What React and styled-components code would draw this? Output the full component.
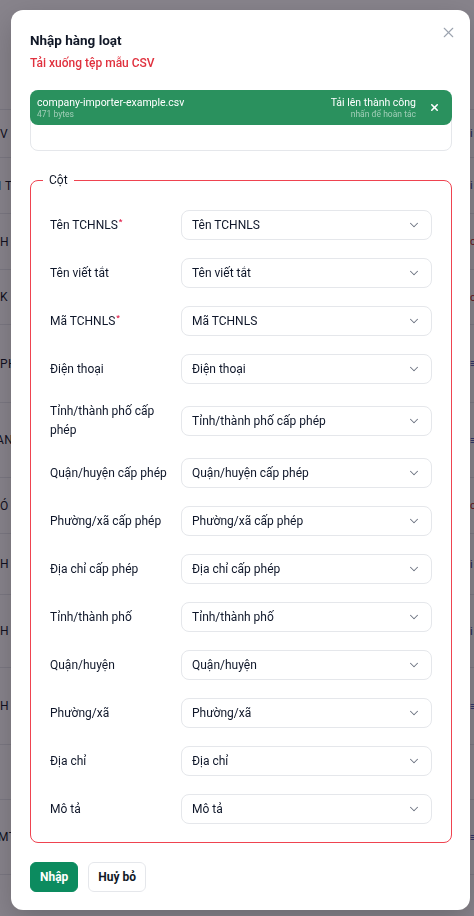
import React from "react";
import styled, { createGlobalStyle } from "styled-components";
import { ChevronDown, X } from "lucide-react";

const GlobalStyle = createGlobalStyle`
  * { box-sizing: border-box; }
  html, body { margin: 0; padding: 0; }
  body {
    font-family: Roboto, Inter, "Liberation Sans", sans-serif;
    color: #111827;
    background: #ffffff;
    overflow: hidden;
  }
`;

const Page = styled.div`
  width: 474px;
  height: 916px;
  background: #ffffff;
  overflow: hidden;
`;

const PageHeader = styled.div`
  height: 110px;
  border-bottom: 1px solid #e5e7eb;
`;

const TableRow = styled.div`
  height: ${(p) => p.$h}px;
  border-bottom: 1px solid #e5e7eb;
  display: flex;
  align-items: center;
  justify-content: space-between;
  font-size: 12px;
  color: #111827;
  white-space: nowrap;
`;

const CutCell = styled.span`
  margin-left: ${(p) => p.$offset}px;
  letter-spacing: 0.5px;
`;

const SideCell = styled.span`
  margin-right: -30px;
  width: 34px;
  font-size: 11px;
  color: ${(p) => p.$color};
`;

const Overlay = styled.div`
  position: fixed;
  inset: 0;
  background: rgba(18, 10, 26, 0.5);
`;

const Modal = styled.div`
  position: fixed;
  top: 10px;
  left: 11px;
  width: 459px;
  background: #ffffff;
  border-radius: 12px;
  padding: 20px 18px 18px 19px;
  box-shadow: 0 10px 30px rgba(0, 0, 0, 0.2);
`;

const CloseButton = styled.button`
  position: absolute;
  top: 11px;
  right: 11px;
  width: 22px;
  height: 22px;
  border: 0;
  background: none;
  padding: 0;
  color: #9ca3af;
  display: flex;
  align-items: center;
  justify-content: center;
`;

const Title = styled.h2`
  margin: 0;
  font-size: 13.5px;
  line-height: 20px;
  font-weight: 700;
  color: #111827;
`;

const TemplateLink = styled.a`
  display: block;
  margin-top: 4px;
  font-size: 12px;
  line-height: 18px;
  font-weight: 500;
  color: #e0313e;
  text-decoration: none;
`;

const UploadBox = styled.div`
  margin-top: 18px;
  height: 61px;
  border: 1px solid #e5e7eb;
  border-radius: 8px;
`;

const FileBar = styled.div`
  margin: -1px -1px 0;
  height: 35px;
  background: #2a915e;
  border-radius: 8px;
  display: flex;
  align-items: center;
  padding: 0 12px 0 7px;
  color: #ffffff;
`;

const FileInfo = styled.div`
  flex: 1;
  display: flex;
  flex-direction: column;
  align-items: ${(p) => (p.$right ? "flex-end" : "flex-start")};
`;

const FileMain = styled.span`
  font-size: 10.5px;
  line-height: 13px;
`;

const FileSub = styled.span`
  font-size: 8.5px;
  line-height: 11px;
  color: rgba(255, 255, 255, 0.55);
`;

const UndoButton = styled.button`
  border: 0;
  background: none;
  color: #ffffff;
  padding: 0;
  margin-left: 13px;
  display: flex;
  align-items: center;
`;

const Fieldset = styled.fieldset`
  margin: 20px 0 0;
  border: 1px solid #ef4350;
  border-radius: 8px;
  padding: 21px 19px 18px 19px;
  min-width: 0;
`;

const Legend = styled.legend`
  margin-left: -7px;
  padding: 0 6px;
  font-size: 12px;
  line-height: 18px;
  color: #111827;
`;

const Grid = styled.div`
  display: grid;
  grid-template-columns: 123px 1fr;
  column-gap: 8px;
  row-gap: 18px;
  align-items: center;
`;

const Label = styled.label`
  font-size: 12px;
  line-height: 19px;
  color: #0f172a;
`;

const Required = styled.sup`
  color: #e11d48;
  font-size: 8px;
  font-weight: 700;
  line-height: 0;
  margin-left: 1px;
`;

const Select = styled.div`
  height: 30px;
  border: 1px solid #e5e7eb;
  border-radius: 8px;
  padding: 0 10px;
  display: flex;
  align-items: center;
  justify-content: space-between;
  font-size: 12px;
  color: #0f172a;
  background: #ffffff;
`;

const Footer = styled.div`
  margin-top: 19px;
  display: flex;
  gap: 10px;
`;

const Button = styled.button`
  height: 30px;
  padding: 0 9px;
  border-radius: 6px;
  border: 1px solid ${(p) => (p.$primary ? "#0c8b5f" : "#e5e7eb")};
  background: ${(p) => (p.$primary ? "#0c8b5f" : "#ffffff")};
  color: ${(p) => (p.$primary ? "#ffffff" : "#111827")};
  font-family: inherit;
  font-size: 12px;
  font-weight: 700;
`;

const bgRows = [
  { h: 48, left: "V", offset: 0, side: "i", color: "#1e3a8a" },
  { h: 56, left: "I T", offset: -2, side: "i", color: "#1e3a8a" },
  { h: 56, left: "H", offset: 0, side: "c", color: "#b91c1c" },
  { h: 55, left: "K", offset: 0, side: "c", color: "#b91c1c" },
  { h: 78, left: "PHA", offset: 0, side: "≡", color: "#1e40af" },
  { h: 75, left: "ANG", offset: -4, side: "≡", color: "#1e40af" },
  { h: 56, left: "Ó", offset: 0, side: "c", color: "#b91c1c" },
  { h: 61, left: "H", offset: 0, side: "i", color: "#1e3a8a" },
  { h: 73, left: "H", offset: 0, side: "i", color: "#1e3a8a" },
  { h: 77, left: "H", offset: 0, side: "≡", color: "#1e40af" },
  { h: 55, left: "", offset: 0, side: "", color: "#1e3a8a" },
  { h: 75, left: "MT", offset: -2, side: "≡", color: "#1e40af" },
];

const fields = [
  { label: "Tên TCHNLS", required: true },
  { label: "Tên viết tắt" },
  { label: "Mã TCHNLS", required: true },
  { label: "Điện thoại" },
  { label: "Tỉnh/thành phố cấp phép" },
  { label: "Quận/huyện cấp phép" },
  { label: "Phường/xã cấp phép" },
  { label: "Địa chỉ cấp phép" },
  { label: "Tỉnh/thành phố" },
  { label: "Quận/huyện" },
  { label: "Phường/xã" },
  { label: "Địa chỉ" },
  { label: "Mô tả" },
];

export default function App() {
  return (
    <>
      <GlobalStyle />
      <Page>
        <PageHeader />
        {bgRows.map((r, i) => (
          <TableRow key={i} $h={r.h}>
            <CutCell $offset={r.offset}>{r.left}</CutCell>
            <SideCell $color={r.color}>{r.side}</SideCell>
          </TableRow>
        ))}
      </Page>
      <Overlay />
      <Modal>
        <CloseButton aria-label="Đóng">
          <X size={17} strokeWidth={1.5} />
        </CloseButton>
        <Title>Nhập hàng loạt</Title>
        <TemplateLink href="#">Tải xuống tệp mẫu CSV</TemplateLink>
        <UploadBox>
          <FileBar>
            <FileInfo>
              <FileMain>company-importer-example.csv</FileMain>
              <FileSub>471 bytes</FileSub>
            </FileInfo>
            <FileInfo $right>
              <FileMain>Tải lên thành công</FileMain>
              <FileSub>nhấn để hoàn tác</FileSub>
            </FileInfo>
            <UndoButton aria-label="Hoàn tác">
              <X size={11} strokeWidth={3.5} />
            </UndoButton>
          </FileBar>
        </UploadBox>
        <Fieldset>
          <Legend>Cột</Legend>
          <Grid>
            {fields.map((f) => (
              <React.Fragment key={f.label}>
                <Label>
                  {f.label}
                  {f.required && <Required>*</Required>}
                </Label>
                <Select>
                  <span>{f.label}</span>
                  <ChevronDown size={14} strokeWidth={1.75} color="#6b7280" />
                </Select>
              </React.Fragment>
            ))}
          </Grid>
        </Fieldset>
        <Footer>
          <Button $primary>Nhập</Button>
          <Button>Huỷ bỏ</Button>
        </Footer>
      </Modal>
    </>
  );
}
